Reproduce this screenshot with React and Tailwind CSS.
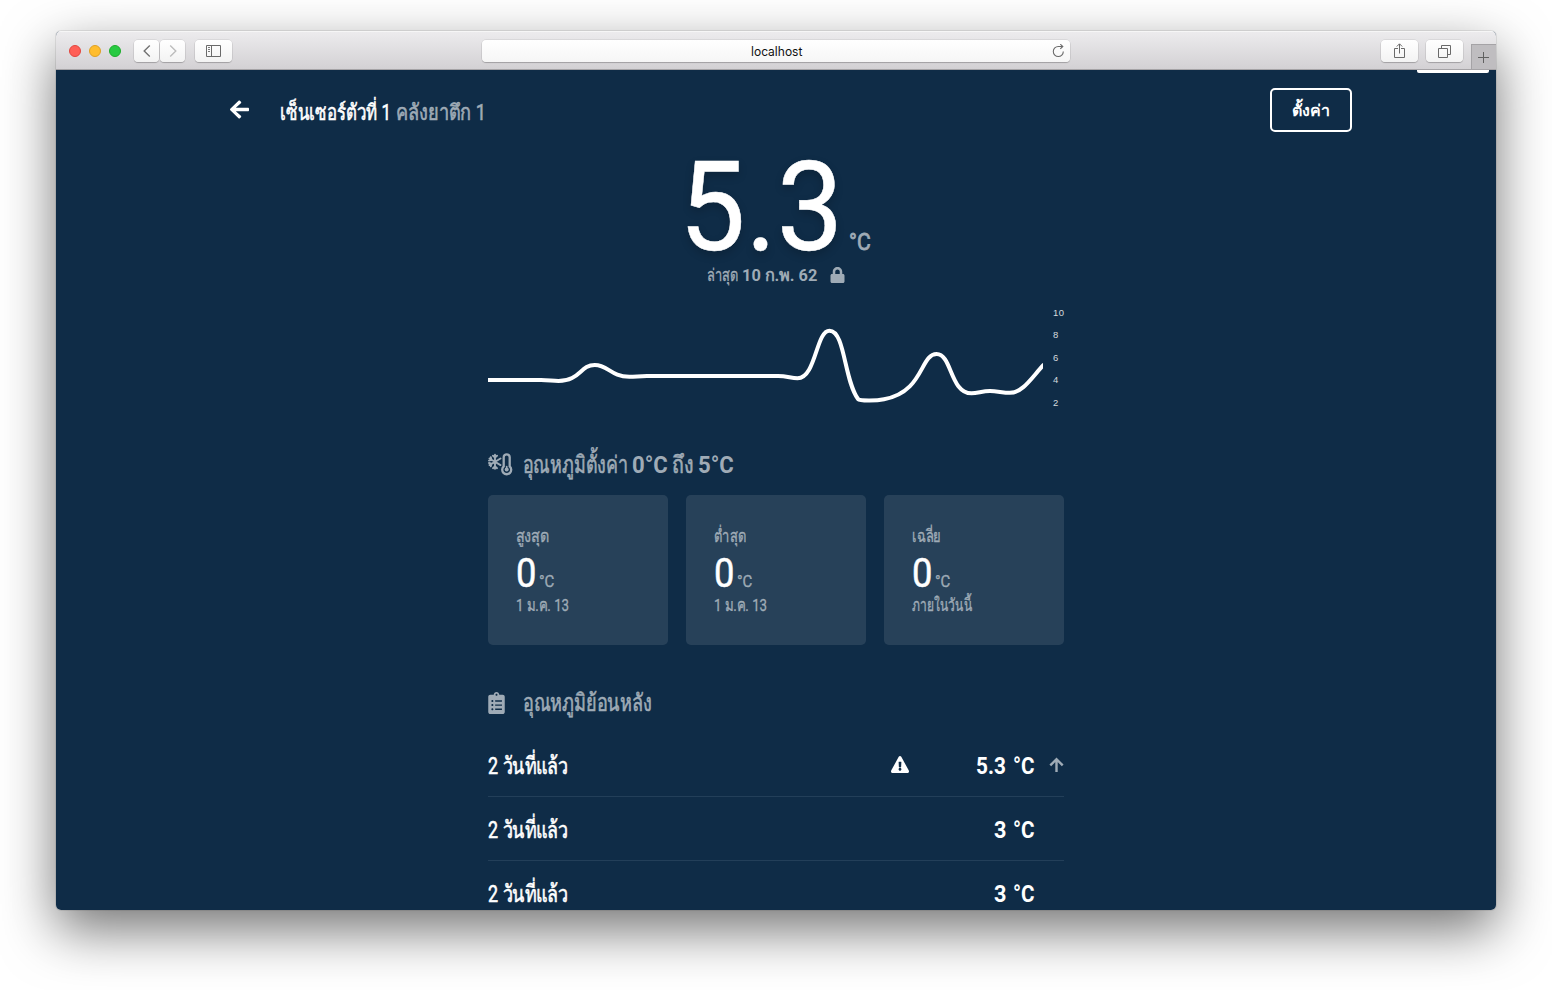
import { useLayoutEffect, useRef, useState } from "react";
import { FaArrowLeft, FaLock, FaExclamationTriangle, FaClipboardList } from "react-icons/fa";

// Condenses its text horizontally so that it fills exactly `w` pixels.
function Fit({ w, className = "", children }) {
  const ref = useRef(null);
  const [scale, setScale] = useState(1);
  useLayoutEffect(() => {
    if (ref.current) setScale(w / ref.current.offsetWidth);
  }, [w, children]);
  return (
    <span className={`block shrink-0 ${className}`} style={{ width: w }}>
      <span
        ref={ref}
        className="inline-block origin-left whitespace-nowrap"
        style={{ transform: `scaleX(${scale})` }}
      >
        {children}
      </span>
    </span>
  );
}

function ToolButton({ className, children }) {
  return (
    <div
      className={`flex h-[22px] items-center justify-center rounded-[4px] bg-linear-to-b from-white to-[#f3f3f3] shadow-[0_0_0_0.5px_rgba(0,0,0,0.12),0_1px_1px_rgba(0,0,0,0.2)] ${className}`}
    >
      {children}
    </div>
  );
}

function TitleBar() {
  return (
    <div className="flex h-[39px] shrink-0 items-start border-b border-[#a5a3a6] bg-linear-to-b from-[#edecee] to-[#d3d1d4] shadow-[inset_0_1px_0_#f6f6f6]">
      <div className="mt-[14px] ml-[13px] flex gap-2">
        <div className="size-3 rounded-full border border-[#e2463f] bg-[#ff5f57]" />
        <div className="size-3 rounded-full border border-[#dfa023] bg-[#ffbd2e]" />
        <div className="size-3 rounded-full border border-[#1dad2b] bg-[#28ca42]" />
      </div>
      <div className="mt-[9px] ml-[13px] flex gap-px">
        <ToolButton className="w-[25px]">
          <svg width="8" height="12" viewBox="0 0 8 12" fill="none" stroke="#737373" strokeWidth="1.4">
            <path d="M6.8 .6 1.2 6l5.6 5.4" />
          </svg>
        </ToolButton>
        <ToolButton className="w-[25px]">
          <svg width="8" height="12" viewBox="0 0 8 12" fill="none" stroke="#bdbdbd" strokeWidth="1.4">
            <path d="M1.2 .6 6.8 6 1.2 11.4" />
          </svg>
        </ToolButton>
      </div>
      <ToolButton className="mt-[9px] ml-[10px] w-[37px]">
        <svg width="15" height="12" viewBox="0 0 15 12" fill="none" stroke="#6a6a6a">
          <path d="M.5 .5h14v11H.5zM5.5 .5v11" />
          <path d="M2 2.5h2M2 4.5h2M2 6.5h2" strokeWidth=".9" />
        </svg>
      </ToolButton>
      <div className="mt-[9px] ml-[250px] flex h-[22px] w-[588px] items-center rounded-[4px] bg-linear-to-b from-white to-[#f6f6f6] pr-[5px] pl-[269px] shadow-[0_0_0_0.5px_rgba(0,0,0,0.12),0_1px_1px_rgba(0,0,0,0.2)]">
        <Fit w={51} className="mt-px font-['Inter',sans-serif] text-[12.5px] leading-5 text-[#111]">localhost</Fit>
        <svg className="ml-auto" width="13" height="14" viewBox="0 0 13 14" fill="none" stroke="#6a6a6a" strokeWidth="1.1">
          <path d="M11.3 7.5a5 5 0 1 1-5-5h4" />
          <path d="M8.3 .2 10.8 2.5 8.3 4.9" />
        </svg>
      </div>
      <ToolButton className="mt-[9px] ml-[311px] w-[37px]">
        <svg width="11" height="16" viewBox="0 0 11 16" fill="none" stroke="#6a6a6a">
          <path d="M4 5.5H.5v9h10v-9H7M5.5 10.5V1M2.8 3.5 5.5 .8l2.7 2.7" />
        </svg>
      </ToolButton>
      <ToolButton className="mt-[9px] ml-2 w-[37px]">
        <svg width="13" height="13" viewBox="0 0 13 13" fill="none" stroke="#6a6a6a">
          <path d="M.5 3.5h9v9h-9zM3.5 3V.5h9v9H10" />
        </svg>
      </ToolButton>
      <div className="mt-[13px] ml-auto flex h-[25px] w-[25px] items-center border-t border-l border-[#a5a3a6] bg-[#bfbdc0] pt-px pl-[6px]">
        <svg width="11" height="11" viewBox="0 0 11 11" stroke="#606060">
          <path d="M5.5 0v11M0 5.5h11" />
        </svg>
      </div>
    </div>
  );
}

function ColdIcon() {
  return (
    <svg width="25" height="23" viewBox="0 0 25 23" fill="none" stroke="currentColor" strokeLinecap="round">
      <path strokeWidth="1.9" d="M7 1.8v14M1.500 5.500l11 6.600M1.500 12.100l11-6.600M5 2.700l2 1.800 2-1.800M5 15.200l2-1.800 2 1.800M1 7.600l2.400-.7-.6-2.700M1 10l2.400.7-.6 2.700" />
      <path strokeWidth="2.3" d="M15.700 13.400V4.300a3 3 0 0 1 6 0v9.100a4.500 4.500 0 1 1-6 0z" />
      <circle cx="18.700" cy="16.600" r="2" fill="currentColor" stroke="none" />
      <path strokeWidth="1.6" d="M18.700 13.500v3" />
    </svg>
  );
}

const scaleLabels = [10, 8, 6, 4, 2];

function Chart() {
  return (
    <div className="mt-[14px] flex h-[112px]">
      <svg className="shrink-0" width="555" height="112" viewBox="488 301 555 112" fill="none" stroke="#fff" strokeWidth="4">
        <path d="M488 380H541C549 380 552 381 558.5 381C580 381 580 365 594.8 365C608 365 611 376.8 629.3 376.8C636 376.8 639 376 647 376H778C787 376 791 378.3 797.5 378.3C816 378.3 816 330.7 829.5 330.7C845 330.7 844 380 858 399C860 401 876 401 884 399.3C924 392 920 354 936.6 354C952 354 950 393.3 971.5 393.3C978 393.3 982 391 990 391C997 391 1003 392.8 1010 392.8C1023 392.8 1032 377 1044 364.5" />
      </svg>
      <div className="ml-[10px] flex w-[11px] shrink-0 flex-col">
        {scaleLabels.map((n) => (
          <span key={n} className="flex h-[22.5px] shrink-0 items-center pt-px font-['Liberation_Sans',sans-serif] text-[9.5px] tracking-[0.4px] text-[#d5dade]">
            {n}
          </span>
        ))}
      </div>
    </div>
  );
}

const stats = [
  { label: "สูงสุด", labelW: 33, note: "1 ม.ค. 13", noteW: 53 },
  { label: "ต่ำสุด", labelW: 32, note: "1 ม.ค. 13", noteW: 53 },
  { label: "เฉลี่ย", labelW: 29, note: "ภายในวันนี้", noteW: 60 },
];

function StatCard({ label, labelW, note, noteW }) {
  return (
    <div className="h-[150px] rounded-[5px] bg-white/10 pt-[29px] pl-[28.3px] text-[17px] leading-6 text-[#9fabb6] [-webkit-text-stroke:0.35px]">
      <Fit w={labelW}>{label}</Fit>
      <div className="mt-[5px] flex h-10 items-baseline gap-[3px] pt-px">
        <Fit w={20} className="text-[40px] leading-10 text-white [-webkit-text-stroke:0.5px]">0</Fit>
        <Fit w={15} className="leading-6">°C</Fit>
      </div>
      <Fit w={noteW}>{note}</Fit>
    </div>
  );
}

const history = [
  { value: "5.3", w: 30, alert: true },
  { value: "3", w: 12 },
  { value: "3", w: 12 },
];

function HistoryRow({ value, w, alert }) {
  return (
    <div className="flex h-16 shrink-0 items-center border-b border-[#233f59] text-[23.5px] leading-8">
      <Fit w={80} className="mt-[3px] [-webkit-text-stroke:0.6px]">2 วันที่แล้ว</Fit>
      <div className="ml-auto flex items-center">
        {alert && <FaExclamationTriangle className="mr-[67px] h-[17px] w-[18px]" preserveAspectRatio="none" />}
        <Fit w={w} className="mt-[3px] font-bold">{value}</Fit>
        <Fit w={22} className="mt-[3px] ml-[7px] font-bold">°C</Fit>
        <div className="ml-[14px] w-[15px] text-[#9fabb6]">
          {alert && (
            <svg width="15" height="16" viewBox="0 0 15 16" fill="none" stroke="currentColor" strokeWidth="2.4">
              <path d="M7.5 15V2.2M1.3 8.4 7.5 2.2l6.2 6.2" />
            </svg>
          )}
        </div>
      </div>
    </div>
  );
}

export default function App() {
  return (
    <div className="h-[990px] w-[1552px] overflow-hidden bg-white px-14 pt-[31px]">
      <div className="h-[879px] rounded-[5px] shadow-[0_0_0_1px_rgba(0,0,0,0.08),0_20px_54px_rgba(0,0,0,0.55)]">
        <div className="flex h-full flex-col overflow-hidden rounded-[5px] bg-[#0f2c47] font-['Roboto',sans-serif] text-white">
          <TitleBar />
          <div className="relative flex min-h-0 flex-1 flex-col overflow-hidden">
            <div className="absolute top-0 right-[7px] h-[3px] w-[72px] rounded-b-[2px] bg-white" />
            <header className="mx-auto flex h-20 w-[1152px] shrink-0 items-center pl-[30px]">
              <FaArrowLeft className="-mt-px h-[21px] w-[19px]" preserveAspectRatio="none" />
              <div className="mt-[5px] ml-[31px] flex gap-[5px] text-[22px] leading-7 [-webkit-text-stroke:0.6px]">
                <Fit w={111}>เซ็นเซอร์ตัวที่ 1</Fit>
                <Fit w={90} className="text-[#9fabb6]">คลังยาตึก 1</Fit>
              </div>
              <button className="ml-auto flex h-11 w-[82px] items-center justify-center rounded-[5px] border-2 border-white text-base leading-6 font-bold">
                <Fit w={38} className="mt-px">ตั้งค่า</Fit>
              </button>
            </header>
            <main className="mx-auto flex w-[576px] flex-col pt-[2px]">
              <div className="ml-[191px] flex h-[111px] items-baseline">
                <Fit w={164} className="text-[125px] leading-[112px] [-webkit-text-stroke:0.5px] [text-shadow:0_4px_10px_rgba(0,0,0,0.2)]">5.3</Fit>
                <Fit w={22} className="ml-[6px] text-2xl leading-8 text-[#9fabb6] [-webkit-text-stroke:0.8px]">°C</Fit>
              </div>
              <div className="ml-[219px] flex text-[17px] leading-6 text-[#9fabb6]">
                <Fit w={31} className="[-webkit-text-stroke:0.35px]">ล่าสุด</Fit>
                <Fit w={75} className="ml-1 font-bold">10 ก.พ. 62</Fit>
                <FaLock className="mt-1 ml-[13px] h-[16px] w-[15px]" />
              </div>
              <Chart />
              <h2 className="mt-9 flex text-2xl leading-8 text-[#9fabb6]">
                <span className="mt-1 w-[35px]"><ColdIcon /></span>
                <Fit w={105} className="[-webkit-text-stroke:0.6px]">อุณหภูมิตั้งค่า</Fit>
                <Fit w={36} className="ml-1 font-bold">0°C</Fit>
                <Fit w={22} className="ml-1 [-webkit-text-stroke:0.6px]">ถึง</Fit>
                <Fit w={36} className="ml-1 font-bold">5°C</Fit>
              </h2>
              <div className="mt-[14px] grid grid-cols-3 gap-[17.3px]">
                {stats.map((s) => <StatCard key={s.label} {...s} />)}
              </div>
              <h2 className="mt-[42px] flex text-2xl leading-8 text-[#9fabb6]">
                <span className="mt-[5px] w-[35px]"><FaClipboardList className="h-[22px] w-[17px]" /></span>
                <Fit w={129} className="[-webkit-text-stroke:0.6px]">อุณหภูมิย้อนหลัง</Fit>
              </h2>
              <div className="mt-[14px] flex flex-col">
                {history.map((h, i) => <HistoryRow key={i} {...h} />)}
              </div>
            </main>
          </div>
        </div>
      </div>
    </div>
  );
}
